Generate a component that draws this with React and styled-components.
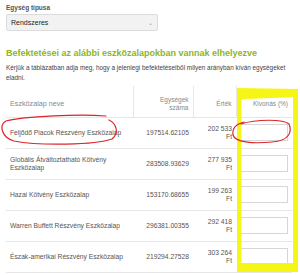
import React from 'react';
import styled, { createGlobalStyle } from 'styled-components';

const GlobalStyle = createGlobalStyle`
    body {
        margin: 0;
        background: #fff;
        font-family: "Liberation Sans", Arial, sans-serif;
    }
`;

const funds = [
    { name: 'Feljődő Piacok Részvény Eszközalap', units: '197514.62105', value: '202\u00a0533 Ft' },
    { name: 'Globális Átváltoztatható Kötvény Eszközalap', units: '283508.93629', value: '277\u00a0935 Ft' },
    { name: 'Hazai Kötvény Eszközalap', units: '153170.68655', value: '199\u00a0263 Ft' },
    { name: 'Warren Buffett Részvény Eszközalap', units: '296381.00355', value: '292\u00a0418 Ft' },
    { name: 'Észak-amerikai Részvény Eszközalap', units: '219294.27528', value: '303\u00a0264 Ft' },
];

const Page = styled.div`
    position: relative;
    width: 300px;
    height: 275px;
    overflow: hidden;
    padding: 4px 6px 0;
    box-sizing: border-box;
`;

const Label = styled.div`
    font-size: 6.5px;
    font-weight: bold;
    color: #555;
    margin-bottom: 3px;
`;

const Select = styled.div`
    display: flex;
    align-items: center;
    justify-content: space-between;
    width: 152px;
    height: 17px;
    box-sizing: border-box;
    padding: 0 4px;
    background: #f2f2f2;
    border: 1px solid #dcdcdc;
    border-radius: 2px;
    font-size: 7px;
    color: #222;
`;

const Caret = styled.span`
    font-size: 6px;
    color: #999;
`;

const Heading = styled.h2`
    margin: 17px 0 0;
    font-size: 9px;
    font-weight: bold;
    color: #8db51f;
`;

const Intro = styled.p`
    margin: 5px 0 0;
    font-size: 6.4px;
    line-height: 9.5px;
    color: #444;
`;

const Table = styled.table`
    margin-top: 4px;
    width: 286px;
    table-layout: fixed;
    border-collapse: collapse;
`;

const Th = styled.th`
    box-sizing: border-box;
    height: 31px;
    padding: 6px 4px 0;
    font-weight: normal;
    font-size: ${p => (p.$small ? '6.5px' : '7.2px')};
    line-height: 8px;
    color: #888;
    text-align: ${p => p.$align || 'right'};
    border-bottom: 1px solid #e6e6e6;
    border-right: ${p => (p.$last ? 'none' : '1px solid #e6e6e6')};
    vertical-align: middle;
`;

const Td = styled.td`
    height: 30px;
    padding: 0 4px 0 ${p => p.$padLeft || 4}px;
    font-size: 6.7px;
    line-height: 8px;
    color: #555;
    text-align: ${p => p.$align || 'right'};
    border-bottom: 1px solid #e6e6e6;
    vertical-align: middle;
`;

const Input = styled.div`
    width: 48px;
    height: 17px;
    box-sizing: border-box;
    border: 1px solid #d6d6d6;
    background: #fff;
`;

const Marks = styled.svg`
    position: absolute;
    left: 0;
    top: 0;
    pointer-events: none;
`;

function Annotations() {
    return (
        <Marks width="300" height="275" viewBox="0 0 300 275">
            <g fill="#f5f516">
                <path d="M237 88 L298 89 L298 97 L245 99 L241 100 Z" />
                <rect x="237" y="88" width="4.5" height="184" />
                <rect x="293" y="89" width="5" height="183" />
                <rect x="237" y="263" width="61" height="9" />
            </g>
            <g fill="none" stroke="#d9262b" strokeWidth="1.2" strokeLinecap="round">
                <path d="M106 116 C 80 114, 25 116, 6 121 C -1 125, 1 137, 14 141 C 40 146, 95 145, 112 139 C 119 133, 117 124, 109 120" />
                <path d="M241 124 C 256 119, 284 119, 289 124 C 292 131, 290 141, 272 142 C 252 144, 235 142, 233 135 C 232 128, 236 124, 244 122" />
            </g>
        </Marks>
    );
}

export default function App() {
    return (
        <>
            <GlobalStyle />
            <Page>
                <Label>Egység típusa</Label>
                <Select>
                    <span>Rendszeres</span>
                    <Caret>⌄</Caret>
                </Select>
                <Heading>Befektetései az alábbi eszközalapokban vannak elhelyezve</Heading>
                <Intro>
                    Kérjük a táblázatban adja meg, hogy a jelenlegi befektetéseiből milyen arányban kíván egységeket eladni.
                </Intro>
                <Table>
                    <colgroup>
                        <col style={{ width: 127 }} />
                        <col style={{ width: 60 }} />
                        <col style={{ width: 43 }} />
                        <col style={{ width: 56 }} />
                    </colgroup>
                    <thead>
                        <tr>
                            <Th $align="left">Eszközalap neve</Th>
                            <Th $small>Egységek<br />száma</Th>
                            <Th $small>Érték</Th>
                            <Th $small $last>Kivonás (%)</Th>
                        </tr>
                    </thead>
                    <tbody>
                        {funds.map(f => (
                            <tr key={f.units}>
                                <Td $align="left">{f.name}</Td>
                                <Td>{f.units}</Td>
                                <Td $padLeft={10}>{f.value}</Td>
                                <Td><Input /></Td>
                            </tr>
                        ))}
                    </tbody>
                </Table>
                <Annotations />
            </Page>
        </>
    );
}
